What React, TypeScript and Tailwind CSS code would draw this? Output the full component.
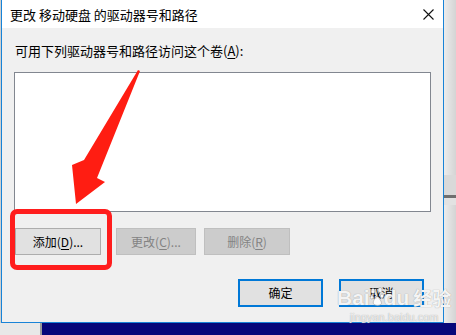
import React from "react";

function Key({ children }: { children: React.ReactNode }) {
  return <span className="underline underline-offset-2">{children}</span>;
}

function WinButton({
  children,
  width,
  disabled,
  primary,
}: {
  children: React.ReactNode;
  width: string;
  disabled?: boolean;
  primary?: boolean;
}) {
  const base = "flex items-center justify-center text-[12px] leading-none";
  if (primary) {
    return (
      <div className={`${base} ${width} h-[28px] bg-[#e1e1e1] border-2 border-[#0078d7] text-black`}>
        {children}
      </div>
    );
  }
  if (disabled) {
    return (
      <div className={`${base} ${width} h-[27px] bg-[#cccccc] border border-[#bfbfbf] text-[#838383]`}>
        {children}
      </div>
    );
  }
  return (
    <div className={`${base} ${width} h-[27px] bg-[#e1e1e1] border border-[#adadad] text-black`}>
      {children}
    </div>
  );
}

export default function App() {
  return (
    <div className="relative w-[456px] h-[335px] overflow-hidden bg-[#07077a] font-['Noto_Sans_CJK_SC','Noto_Sans',sans-serif]">
      <div className="flex h-[323px]">
        <div className="w-[1px] bg-[#cfcfcf]" />

        {/* dialog */}
        <div className="flex flex-col w-[443px] bg-[#f0f0f0] border-x border-b border-[#1883d7]">
          <div className="flex items-center justify-between h-[28px] bg-white pl-[8px] pr-[9px]">
            <span className="text-[13px] leading-[17px] text-black">更改 移动硬盘 的驱动器号和路径</span>
            <svg width="11" height="11" viewBox="0 0 11 11">
              <path d="M0.5 0.5 L10.5 10.5 M10.5 0.5 L0.5 10.5" stroke="#111" strokeWidth="1.1" />
            </svg>
          </div>

          <div className="flex flex-col flex-1 px-[12px] pt-[14px]">
            <div className="text-[13px] leading-[17px] text-black pl-[1px]">
              可用下列驱动器号和路径访问这个卷(<Key>A</Key>):
            </div>

            <div className="mt-[13px] h-[140px] bg-white border border-[#828790]" />

            <div className="flex mt-[16px] pl-[1px]">
              <WinButton width="w-[86px]">
                添加(<Key>D</Key>)...
              </WinButton>
              <div className="ml-[15px]">
                <WinButton width="w-[80px]" disabled>
                  更改(<Key>C</Key>)...
                </WinButton>
              </div>
              <div className="ml-[8px]">
                <WinButton width="w-[86px]" disabled>
                  删除(<Key>R</Key>)
                </WinButton>
              </div>
            </div>

            <div className="flex justify-end gap-[16px] mt-[24px] pr-[7px]">
              <WinButton width="w-[85px]" primary>
                确定
              </WinButton>
              <WinButton width="w-[85px]" primary>
                取消
              </WinButton>
            </div>
          </div>
        </div>

        {/* background window on the right */}
        <div className="flex flex-col flex-1 bg-gradient-to-r from-[#ececec] to-[#d4d4d4]">
          <div className="h-[175px]" />
          <div className="h-[20px] bg-[#d9d9d9]" />
          <div className="h-[3px] bg-[#6f6f6f]" />
          <div className="h-[7px] bg-[#e2e2e2]" />
          <div className="flex-1" />
        </div>
      </div>

      <div className="flex h-[12px]">
        <div className="w-[40px] bg-[#e8e8e8]" />
        <div className="w-[2px] bg-[#9a9a9a]" />
        <div className="flex-1" />
      </div>

      {/* red annotation box */}
      <div className="absolute left-[10px] top-[209px] w-[102px] h-[61px] border-[5px] border-[#ff1d1d] rounded-[7px]" />

      {/* red arrow */}
      <svg className="absolute left-0 top-0" width="456" height="335" viewBox="0 0 456 335">
        <polygon
          points="138,70 140,71 97,178 105,182 76,204 72,165 84,160"
          fill="#ff1d12"
        />
      </svg>

      {/* watermark */}
      <div className="absolute left-[337px] top-[287px] flex flex-col items-center text-white/90 [text-shadow:0_0_1px_#8a8a8a]">
        <div className="flex items-end text-[21px] leading-[22px] font-bold font-['Liberation_Sans',sans-serif]">
          <span>Bai</span>
          <svg width="14" height="20" viewBox="0 0 14 20" className="mb-[2px]">
            <g fill="white" stroke="#9a9a9a" strokeWidth="0.6" opacity="0.9">
              <ellipse cx="3" cy="4" rx="2" ry="2.6" />
              <ellipse cx="10" cy="3" rx="2" ry="2.6" />
              <ellipse cx="1.8" cy="10" rx="1.6" ry="2" />
              <ellipse cx="12" cy="9" rx="1.6" ry="2" />
              <path d="M7 9 C3 13 2 17 5 18 C7 18.5 8 18.5 10 18 C13 17 11 13 7 9 Z" />
            </g>
          </svg>
          <span>du</span>
          <span className="ml-[4px] text-[19px] font-['Noto_Sans_CJK_SC',sans-serif]">经验</span>
        </div>
        <div className="text-[11px] leading-[12px] mt-[2px] font-['Liberation_Sans',sans-serif] text-white/80">
          jingyan.baidu.com
        </div>
      </div>
    </div>
  );
}
